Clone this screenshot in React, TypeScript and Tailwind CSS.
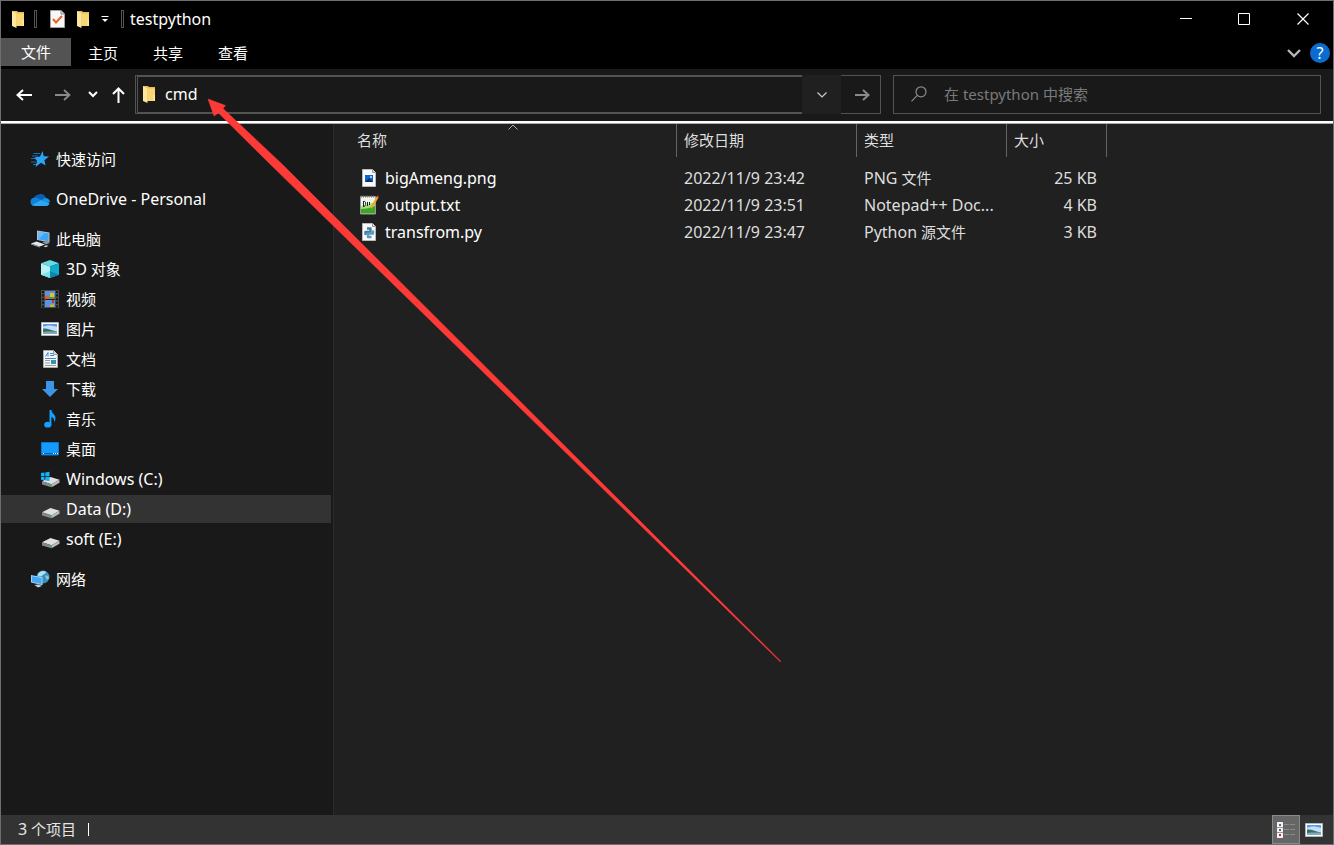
import type { ReactNode } from "react";

/* Iconos */
const FolderIcon = () => (
    <svg viewBox="0 0 12 17" className="h-[17px] w-3 shrink-0">
        <path d="M0 0h5l1 1h6v14H0z" fill="#e9bd51" />
        <path d="M5 2.5h7V15H5z" fill="#f9d675" />
        <path d="M0 .3l4.500 1.700v15L0 15z" fill="#fce79c" />
        <path d="M10.500 9H12v6h-1.500z" fill="#ffe9a4" />
    </svg>
);

const CheckDocIcon = () => (
    <svg viewBox="0 0 15 18" className="h-[18px] w-[15px]">
        <path d="M.5 .5H11L14.500 4v13.500H.5z" fill="#f7f7f7" stroke="#a0a0a0" />
        <path d="M11 .5V4h3.500" fill="#ddd" stroke="#888" />
        <path d="M3 9l3 3.500L12 6" fill="none" stroke="#e8632a" strokeWidth="2" />
    </svg>
);

const StarIcon = () => (
    <svg viewBox="0 0 18 16" className="h-4 w-[18px]">
        <path d="M2.500 2.500H9M1 5h6M0 7.500h6M0 11h5M2 13.500h4" stroke="#1673b8" />
        <path d="M11.500 0l1.300 5.200 5.200.4-4.600 3.600 1.200 5.300-4.600-2.800L4.500 16 6 10 3.500 6.500 9 5.500z" fill="#2ba5f4" />
    </svg>
);

const CloudIcon = () => (
    <svg viewBox="0 0 20 13" className="h-[13px] w-5">
        <path d="M3.700 5.500A6.800 6.800 0 0 1 16 4.600L11 9z" fill="#0a5fb4" />
        <path d="M4.500 13A4.200 4.200 0 0 1 3.800 4.700c2-.6 3.400.1 4.600.9L14 9l-4 4z" fill="#1280d8" />
        <path d="M10.500 7.500l3.800-2.300A4.200 4.200 0 0 1 20 9l-4 2z" fill="#1a93e6" />
        <path d="M4.600 13L2 12l8.800-4.700 8.800 3.300A3.300 3.300 0 0 1 17 13z" fill="#2aa9f2" />
    </svg>
);

const ComputerIcon = () => (
    <svg viewBox="0 0 19 18" className="h-[18px] w-[19px]">
        <path d="M6 .5l12.500 2v9.800L6 10z" fill="#b6c2cb" />
        <path d="M7 1.700l10.600 1.700v7.800L7 9.200z" fill="#3da5f5" />
        <path d="M7 1.700l7 1.100-6.500 6.500-.5-.1z" fill="#68bcf9" />
        <path d="M11 12l4-1 4 2-4 1.500z" fill="#8a9298" />
        <path d="M0 13.600l5.500-2L14 14.400l-5.300 2.200z" fill="#e4e7ea" />
        <path d="M0 13.600l8.700 3v1L0 14.600z" fill="#9aa1a6" />
        <path d="M12.500 16.300l3-1 2 .8-3 1.200z" fill="#d7dadd" />
    </svg>
);

const CubeIcon = () => (
    <svg viewBox="0 0 18 18" className="h-[18px] w-[18px]">
        <path d="M9 0l9 3.200-9 3.200-9-3.200z" fill="#66dbe3" />
        <path d="M0 3.200l9 3.200V18l-9-3.200z" fill="#b4f2f4" />
        <path d="M9 6.400l9-3.200v11.600L9 18z" fill="#13a9cb" />
        <path d="M0 14.800L9 11v7z" fill="#7fe3ea" />
        <path d="M9 11l9 3.800L9 18z" fill="#0b87b0" />
    </svg>
);

const VideoIcon = () => (
    <svg viewBox="0 0 18 18" className="h-[18px] w-[18px]">
        <path d="M0 0h18v18H0z" fill="#4b4b4b" />
        <path d="M4 1h10v8H4zM4 10h10v7H4z" fill="#5b93e6" />
        <path d="M4 5.500h4V9H4z" fill="#df5a35" />
        <path d="M9 3h4v4H9z" fill="#d9c434" />
        <path d="M8 7h6v2H8z" fill="#4b9b4b" />
        <path d="M11 10h2v3h-2z" fill="#c8332c" />
        <path d="M9 14.500h4V17H9z" fill="#d6b52e" />
        <path d="M2 1v17M16 1v17" stroke="#151515" strokeWidth="2" strokeDasharray="2 1.600" />
        <path d="M4 9.500h10" stroke="#222" />
    </svg>
);

const PictureIcon = () => (
    <svg viewBox="0 0 18 14" className="h-[14px] w-[18px]">
        <path d="M.5 .5h17v13H.5z" fill="#fff" stroke="#b5b5b5" />
        <path d="M2 2h14v5H2z" fill="#5a9ced" />
        <path d="M2 5c4-2 8-2 14 0v4H2z" fill="#c3e1f8" />
        <path d="M2 6.500c4-.5 7 1.500 14 3V12H2z" fill="#3c6f61" />
        <path d="M2 10c5-.8 9-.6 14-.5V12H2z" fill="#7fa9bd" />
    </svg>
);

const DocumentIcon = () => (
    <svg viewBox="0 0 15 18" className="h-[18px] w-[15px]">
        <path d="M.5 .5h10l4 4v13H.5z" fill="#f5f5f5" stroke="#a8a8a8" />
        <path d="M10.500 .5v4h4" fill="#ddd" stroke="#999" />
        <path d="M2.500 6.500l2.500-4v4M7 3.500h3M7 5.500h4" fill="none" stroke="#2f8ad8" />
        <path d="M2 8.500h11" stroke="#3a8fd0" />
        <path d="M2 10.500h5M2 13h5M2 15.500h11" stroke="#999" />
        <path d="M8 10h5v4H8z" fill="#3c8faf" />
    </svg>
);

const DownloadIcon = () => (
    <svg viewBox="0 0 16 16" className="h-4 w-4">
        <path d="M4 0h8v8h4l-8 8-8-8h4z" fill="#3b95e8" />
    </svg>
);

const MusicIcon = () => (
    <svg viewBox="0 0 12 18" className="h-[18px] w-3">
        <ellipse cx="3.800" cy="14.700" rx="3.600" ry="2.900" fill="#13a0ff" />
        <path d="M5.500 0h2c.2 3.500 4 4.500 4 8 0 1.500-.6 3-1.500 4 .4-3-1-4.500-2.600-5v8H5.500z" fill="#13a0ff" />
    </svg>
);

const DesktopIcon = () => (
    <svg viewBox="0 0 18 14" className="h-[14px] w-[18px]">
        <path d="M.5 .5h17V13H.5z" fill="#149bff" stroke="#0a78cf" />
        <path d="M1 11.500h16" stroke="#0b5fa3" />
        <path d="M2 11.500h1M12 11.500h1M14 11.500h1M16 11.500h1" stroke="#fff" />
    </svg>
);

const DriveShape = () => (
    <>
        <path d="M1 12.200L9.500 8l9 2.800-8 4.400z" fill="#dfe1e2" />
        <path d="M1 12.200l9.500 3v3L1 15.500z" fill="#858789" />
        <path d="M10.500 15.200l8-4.400v3l-8 4.400z" fill="#b9bbbc" />
        <path d="M6.500 15.800l2 .6" stroke="#35d04a" strokeWidth="1.200" />
    </>
);

const DriveIcon = () => (
    <svg viewBox="0 0 19 19" className="h-[19px] w-[19px]">
        <DriveShape />
    </svg>
);

const WindowsDriveIcon = () => (
    <svg viewBox="0 0 19 19" className="h-[19px] w-[19px]">
        <g transform="translate(0 -1)">
            <DriveShape />
        </g>
        <path d="M0 3l3.500-.5V6H0zM4.300 2.400l4.200-.6V6H4.300zM0 6.800h3.500v3.500L0 9.800zM4.300 6.800h4.200V11l-4.200-.6z" fill="#12b5f5" />
    </svg>
);

const NetworkIcon = () => (
    <svg viewBox="0 0 19 18" className="h-[18px] w-[19px]">
        <circle cx="12" cy="7" r="6.500" fill="#3c8fb8" />
        <path d="M7 4c2-3 6-4 8-2 0 2-3 2-4 4-1 1-3 0-4 0z" fill="#aee0f0" />
        <path d="M14 6c2-1 4 0 4 2-1 2-3 2-3 0z" fill="#84c6e2" />
        <path d="M0 5l11.500 2.200v8L0 12.500z" fill="#9fd3f7" />
        <path d="M1 6.200l9.500 1.900V14L1 11.800z" fill="#42a8f5" />
        <path d="M3.500 15l4-.5L11 16l-4 1.500z" fill="#c9ced2" />
    </svg>
);

const PngFileIcon = () => (
    <svg viewBox="0 0 14 18" className="h-[18px] w-[14px]">
        <path d="M.5 .5h10l3 3v14H.5z" fill="#fafafa" stroke="#b9b9b9" />
        <path d="M10.500 .5v3h3" fill="#ddd" stroke="#999" />
        <path d="M3 6h8v7H3z" fill="#1167c9" />
        <path d="M3 13l4-4 4 4z" fill="#0b2f6f" />
        <path d="M8 7h2v2H8z" fill="#7cd5f8" />
    </svg>
);

const TxtFileIcon = () => (
    <svg viewBox="0 0 19 20" className="h-5 w-[19px]">
        <path d="M.5 1.500h15V19H.5z" fill="#f0f5ec" stroke="#9a9a9a" />
        <path d="M1 11c5-1 9-2 14-4v11.500H1z" fill="#a5dc7c" />
        <path d="M1 14c5 0 9-1 14-3v7.500H1z" fill="#3fa524" />
        <path d="M1 1.500h14" stroke="#777" strokeWidth="2" strokeDasharray="1 1" />
        <path d="M3.500 6v6M3.500 6.500c3-1 3 5 0 5M7.500 7v4M9.500 7v3" fill="none" stroke="#222" />
        <path d="M10.500 14l1-3.500 5-9 2 1-5 9z" fill="#eda92b" />
        <path d="M16.500 1.500l.6-1.200 2 1-.6 1.200z" fill="#c33" />
    </svg>
);

const PyFileIcon = () => (
    <svg viewBox="0 0 14 18" className="h-[18px] w-[14px]">
        <path d="M.5 .5h10l3 3v14H.5z" fill="#fafafa" stroke="#b9b9b9" />
        <path d="M10.500 .5v3h3" fill="#ddd" stroke="#999" />
        <path d="M5 5.500h3.500V9h-5v3" fill="none" stroke="#3f7ea6" strokeWidth="2.400" strokeLinejoin="round" />
        <path d="M9.500 14H6v-3.500h5v-3" fill="none" stroke="#5b9cba" strokeWidth="2.400" strokeLinejoin="round" />
    </svg>
);

const places = [
    { name: "快速访问", icon: <StarIcon />, nested: false },
    { name: "OneDrive - Personal", icon: <CloudIcon />, nested: false, spaced: true },
    { name: "此电脑", icon: <ComputerIcon />, nested: false },
    { name: "3D 对象", icon: <CubeIcon />, nested: true },
    { name: "视频", icon: <VideoIcon />, nested: true },
    { name: "图片", icon: <PictureIcon />, nested: true },
    { name: "文档", icon: <DocumentIcon />, nested: true },
    { name: "下载", icon: <DownloadIcon />, nested: true },
    { name: "音乐", icon: <MusicIcon />, nested: true },
    { name: "桌面", icon: <DesktopIcon />, nested: true },
    { name: "Windows (C:)", icon: <WindowsDriveIcon />, nested: true },
    { name: "Data (D:)", icon: <DriveIcon />, nested: true, selected: true },
    { name: "soft (E:)", icon: <DriveIcon />, nested: true },
    { name: "网络", icon: <NetworkIcon />, nested: false, spaced: true },
];

const files = [
    { name: "bigAmeng.png", date: "2022/11/9 23:42", type: "PNG 文件", size: "25 KB", icon: <PngFileIcon /> },
    { name: "output.txt", date: "2022/11/9 23:51", type: "Notepad++ Doc...", size: "4 KB", icon: <TxtFileIcon /> },
    { name: "transfrom.py", date: "2022/11/9 23:47", type: "Python 源文件", size: "3 KB", icon: <PyFileIcon /> },
];

/* Las letras latinas van un poco mas grandes que las chinas */
const Label = ({ text }: { text: string }) => (
    <>
        {text.split(/([\x21-\x7e][\x20-\x7e]*[\x21-\x7e]|[\x21-\x7e])/).map((part, i) =>
            i % 2 === 1 ? <span key={i} className="text-[16px]">{part}</span> : part
        )}
    </>
);

interface IconButtonProps {
    label: string;
    className: string;
    children: ReactNode;
}

const IconButton = ({ label, className, children }: IconButtonProps) => (
    <button type="button" aria-label={label} className={`flex shrink-0 items-center justify-center ${className}`}>
        {children}
    </button>
);

const TitleBar = () => (
    <header className="flex h-[37px] items-center bg-black pb-px pl-[11px]">
        <FolderIcon />
        <span className="ml-[10px] h-[18px] w-[3px] border border-[#555]" />
        <IconButton label="属性" className="ml-[13px]"><CheckDocIcon /></IconButton>
        <IconButton label="新建文件夹" className="ml-3"><FolderIcon /></IconButton>
        <IconButton label="自定义快速访问工具栏" className="ml-3">
            <svg viewBox="0 0 8 8" className="h-2 w-2">
                <path d="M.5 1.500h7" stroke="#fff" />
                <path d="M1 4h6L4 7z" fill="#fff" />
            </svg>
        </IconButton>
        <span className="ml-3 h-[18px] w-[3px] border border-[#555]" />
        <h1 className="ml-[6px] flex-1 text-[16px] text-white">testpython</h1>
        <IconButton label="最小化" className="h-full w-[58px]">
            <svg viewBox="0 0 12 12" className="h-3 w-3"><path d="M0 5.500h12" stroke="#fff" /></svg>
        </IconButton>
        <IconButton label="最大化" className="h-full w-[58px]">
            <svg viewBox="0 0 12 12" className="h-3 w-3"><path d="M.5 .5h11v11H.5z" fill="none" stroke="#fff" /></svg>
        </IconButton>
        <IconButton label="关闭" className="h-full w-[60px]">
            <svg viewBox="0 0 12 12" className="h-3 w-3"><path d="M.5 .5l11 11M11.500 .5l-11 11" stroke="#fff" strokeWidth="1.200" /></svg>
        </IconButton>
    </header>
);

const MenuBar = () => (
    <nav className="flex h-[31px] items-start bg-black text-white">
        <button type="button" className="h-7 w-[70px] bg-[#535353]">文件</button>
        {["主页", "共享", "查看"].map((item) => (
            <button key={item} type="button" className="h-[30px] w-16 last-of-type:w-16 nth-of-type-[3]:w-[66px]">{item}</button>
        ))}
        <div className="flex-1" />
        <div className="flex h-[30px] items-center gap-[9px] pr-[3px]">
            <IconButton label="展开功能区" className="">
                <svg viewBox="0 0 14 9" className="h-[9px] w-[14px]">
                    <path d="M1 1l6 6 6-6" fill="none" stroke="#b5b5b5" strokeWidth="2.400" />
                </svg>
            </IconButton>
            <IconButton label="帮助" className="h-5 w-5 rounded-full bg-[#0a6cce] text-[16px] leading-5">?</IconButton>
        </div>
    </nav>
);

const AddressBar = () => (
    <div className="flex h-[52px] items-start bg-[#191919] pt-[6px] pr-[12px]">
        <div className="flex h-[39px] w-[134px] shrink-0 items-center">
            <IconButton label="后退" className="ml-[15px]">
                <svg viewBox="0 0 16 12" className="h-3 w-4"><path d="M16 6H1.500M7 1L1.500 6 7 11" fill="none" stroke="#fff" strokeWidth="2" /></svg>
            </IconButton>
            <IconButton label="前进" className="ml-[23px]">
                <svg viewBox="0 0 16 12" className="h-3 w-4"><path d="M0 6h14.500M9 1l5.500 5L9 11" fill="none" stroke="#8a8a8a" strokeWidth="1.800" /></svg>
            </IconButton>
            <IconButton label="最近浏览的位置" className="ml-[17px]">
                <svg viewBox="0 0 10 7" className="h-[7px] w-[10px]"><path d="M1 1l4 4 4-4" fill="none" stroke="#fff" strokeWidth="2" /></svg>
            </IconButton>
            <IconButton label="上移" className="ml-[14px]">
                <svg viewBox="0 0 13 16" className="h-4 w-[13px]"><path d="M6.500 16V1.500M1 7l5.500-5.500L12 7" fill="none" stroke="#fff" strokeWidth="2" /></svg>
            </IconButton>
        </div>
        <div className="flex h-[39px] flex-1">
            <label className="flex flex-1 items-center border-2 border-r-0 border-l-[3px] border-[#535353] pb-px pl-[5px] [border-left-style:double]">
                <FolderIcon />
                <input aria-label="地址" defaultValue="cmd" className="ml-[10px] min-w-0 flex-1 bg-transparent text-[16px] text-white outline-none" />
            </label>
            <IconButton label="以前的位置" className="w-[39px] bg-[#202020]">
                <svg viewBox="0 0 10 6" className="h-[6px] w-[10px]"><path d="M.5 .5L5 5 9.500 .5" fill="none" stroke="#ccc" strokeWidth="1.200" /></svg>
            </IconButton>
            <IconButton label="转到" className="w-10 border border-l-0 border-[#535353] pl-[3px]">
                <svg viewBox="0 0 15 12" className="h-3 w-[15px]"><path d="M0 6h13.500M8 1l5.500 5L8 11" fill="none" stroke="#8a8a8a" strokeWidth="2" /></svg>
            </IconButton>
        </div>
        <label className="ml-3 flex h-[39px] w-[428px] items-center border border-[#535353] pb-px pl-[17px]">
            <svg viewBox="0 0 16 16" className="h-4 w-4 shrink-0">
                <circle cx="10" cy="5.800" r="5" fill="none" stroke="#8a8a8a" strokeWidth="1.200" />
                <path d="M6.300 9.300l-5.800 6" stroke="#8a8a8a" strokeWidth="1.200" />
            </svg>
            <input aria-label="搜索" placeholder="在 testpython 中搜索" className="ml-[17px] min-w-0 flex-1 bg-transparent text-[15px] text-white outline-none placeholder:text-[#7a7a7a]" />
        </label>
    </div>
);

const Sidebar = () => (
    <aside className="w-[333px] shrink-0 border-r border-[#2b2b2b] bg-[#191919] pt-5">
        <ul>
            {places.map(({ name, icon, nested, selected, spaced }) => (
                <li key={name} className={spaced ? "py-[11px]" : "py-px"}>
                    <a
                        href="#"
                        aria-current={selected ? "page" : undefined}
                        className={`mr-[2px] flex h-7 items-center text-white ${nested ? "pl-[38px]" : "pl-[28px]"} ${selected ? "bg-[#333]" : ""}`}
                    >
                        <span className="flex w-[22px] shrink-0 justify-center">{icon}</span>
                        <span className="ml-[5px] leading-7"><Label text={name} /></span>
                    </a>
                </li>
            ))}
        </ul>
    </aside>
);

const FileList = () => (
    <main className="min-w-0 flex-1 bg-[#202020] pl-4">
        <table className="w-[756px] table-fixed border-separate border-spacing-0 text-left">
            <colgroup>
                <col className="w-[327px]" />
                <col className="w-[180px]" />
                <col className="w-[150px]" />
                <col className="w-[100px]" />
            </colgroup>
            <thead>
                <tr className="h-[33px] text-[#dedede]">
                    <th className="relative border-r border-[#636363] p-0 pl-[7px] font-normal">
                        名称
                        <svg viewBox="0 0 10 6" className="absolute top-0 left-1/2 h-[6px] w-[10px] -translate-x-1/2">
                            <path d="M.5 5.500L5 1l4.500 4.500" fill="none" stroke="#aaa" />
                        </svg>
                    </th>
                    <th className="border-r border-[#636363] p-0 pl-[7px] font-normal">修改日期</th>
                    <th className="border-r border-[#636363] p-0 pl-[7px] font-normal">类型</th>
                    <th className="border-r border-[#636363] p-0 pl-[7px] font-normal">大小</th>
                </tr>
            </thead>
            <tbody className="before:block before:h-2">
                {files.map((file) => (
                    <tr key={file.name} className="h-[27px] text-[#dedede]">
                        <td className="p-0">
                            <span className="flex items-center pl-[9px] text-[16px] leading-[27px] text-white">
                                <span className="flex w-5 justify-center pb-[2px]">{file.icon}</span>
                                <span className="ml-[6px]">{file.name}</span>
                            </span>
                        </td>
                        <td className="p-0 pl-[7px] leading-[27px]"><Label text={file.date} /></td>
                        <td className="p-0 pl-[7px] leading-[27px] whitespace-nowrap"><Label text={file.type} /></td>
                        <td className="p-0 pr-[10px] text-right leading-[27px]"><Label text={file.size} /></td>
                    </tr>
                ))}
            </tbody>
        </table>
    </main>
);

const StatusBar = () => (
    <footer className="flex h-[29px] items-center bg-[#333] pl-[17px] text-[#e5e5e5]">
        <span className="pb-[2px]"><Label text="3 个项目" /></span>
        <span className="ml-3 h-[13px] w-px bg-white" />
        <div className="flex-1" />
        <IconButton label="详细信息" className="h-full w-7 border border-[#8a8a8a] bg-[#666]">
            <svg viewBox="0 0 18 16" className="h-4 w-[18px]">
                <path d="M0 0h6v16H0z" fill="#f2f2f2" />
                <path d="M0 5.500h6M0 10.500h6" stroke="#999" />
                <path d="M2 2h2v2H2z" fill="#2f7d9a" />
                <path d="M2 7h2v2H2z" fill="#6b5a86" />
                <path d="M2 12h2v2H2z" fill="#d32c1f" />
                <path d="M7 2.500h5M13 2.500h5M7 7.500h5M13 7.500h5M7 12.500h5M13 12.500h5" stroke="#8a8a8a" />
            </svg>
        </IconButton>
        <IconButton label="大缩略图" className="mr-[5px] h-full w-7"><PictureIcon /></IconButton>
    </footer>
);

export default function App() {
    return (
        <div className="relative flex min-h-screen flex-col border border-[#6e6e6e] bg-[#191919] font-['Noto_Sans','Noto_Sans_CJK_SC',sans-serif] text-[15px]">
            <TitleBar />
            <MenuBar />
            <AddressBar />
            <div className="h-[3px] border-b border-[#aaa] bg-white" />
            <div className="flex flex-1">
                <Sidebar />
                <FileList />
            </div>
            <StatusBar />
            {/* Flecha que apunta a la barra de direcciones */}
            <svg viewBox="0 0 574 564" className="pointer-events-none absolute top-[97px] left-[206px] h-[564px] w-[574px]">
                <path d="M1 1l17.500 6.500-2.500 3L75 66l499 497.500-.5.5L64 67 11.500 15 7 18z" fill="#fc3a38" stroke="#fc3a38" strokeWidth=".5" />
            </svg>
        </div>
    );
}
